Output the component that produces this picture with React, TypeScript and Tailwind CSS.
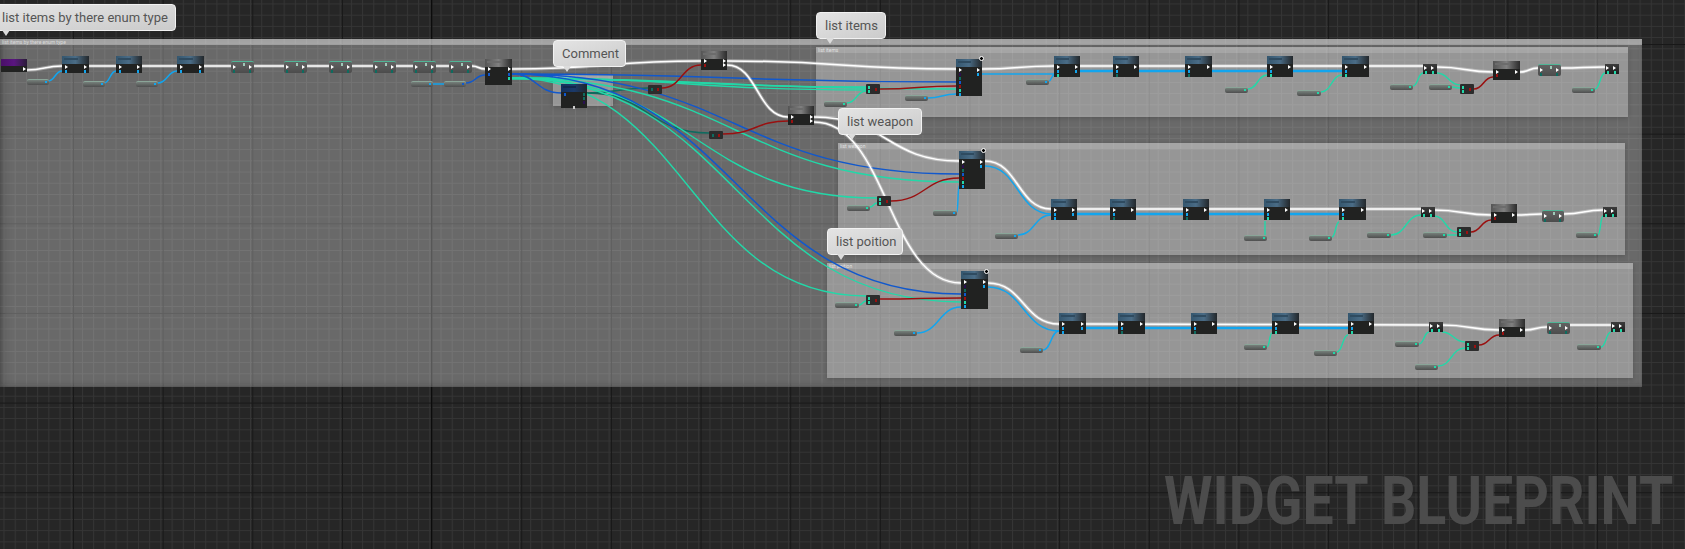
const W = "#ffffff";
const B = "#12a5ee";
const D = "#1158cc";
const T = "#22d8a8";
const DT = "#0f6b5f";
const R = "#9a1010";
const V = "#2a1050";

type Pin = [number, number, string];
type Kind = "blue" | "navy" | "grey" | "purple" | "green" | "exec" | "conv";

const node = (x: number, y: number, w: number, h: number, kind: Kind, pins: Pin[] = []) => ({ x, y, w, h, kind, pins });

// the long "set" nodes in each row
const row = (x: number, y: number, w: number, a: string, b: string, out = true, h = 21) =>
  node(x, y, w, h, "blue", [
    [3, 9, W],
    [w - 5, 9, W],
    [3, 14, a],
    ...(h > 17 ? ([[3, 18, b]] as Pin[]) : []),
    ...(out ? ([[w - 5, 14, a]] as Pin[]) : []),
  ]);
const green = (x: number, y: number, w = 23) =>
  node(x, y, w, 12, "green", [
    [2, 3, W],
    [w - 5, 3, W],
    [2, 8, DT],
    [w - 5, 8, DT],
    [w / 2, 1, "#9fc9b8"],
  ]);
const exec = (x: number, y: number) =>
  node(x, y, 14, 10, "exec", [
    [1, 2, W],
    [8, 2, W],
    [2, 7, T],
    [9, 7, T],
  ]);
const conv = (x: number, y: number) =>
  node(x, y, 14, 10, "conv", [
    [2, 2, T],
    [2, 6, T],
    [9, 4, R],
  ]);
const dark = (x: number, y: number, w: number, h: number) =>
  node(x, y, w, h, "grey", [
    [3, 9, W],
    [w - 5, 9, W],
    [3, 13, R],
  ]);
const setter = (x: number, y: number, w: number, h: number, header: Kind = "blue") =>
  node(x, y, w, h, header, [
    [3, 9, W],
    [w - 5, 9, W],
    [w - 5, 14, B],
    [3, 14, V],
    [3, 18, DT],
    [3, 22, D],
    [3, 26, R],
    [3, 30, T],
    [3, 34, B],
  ]);

const nodes = [
  node(1, 59, 26, 13, "purple", [[22, 8, W]]),
  row(62, 56, 27, B, DT, true, 17),
  row(116, 56, 26, B, DT, true, 17),
  row(177, 56, 27, B, DT, true, 17),
  green(231, 61),
  green(284, 61),
  green(329, 61),
  green(373, 61),
  green(413, 61),
  green(449, 61),
  node(485, 59, 27, 26, "grey", [
    [3, 8, W],
    [23, 8, W],
    [3, 14, D],
    [23, 14, D],
    [23, 18, T],
  ]),
  node(561, 84, 26, 24, "navy", [
    [3, 9, D],
    [22, 9, DT],
    [22, 13, DT],
    [22, 17, V],
    [12, 22, "#cccccc"],
  ]),
  node(701, 51, 26, 19, "grey", [
    [3, 8, W],
    [22, 8, W],
    [22, 12, W],
    [3, 13, R],
  ]),
  node(788, 106, 26, 19, "grey", [
    [3, 9, W],
    [22, 9, W],
    [22, 13, W],
    [3, 14, R],
  ]),
  node(648, 85, 14, 9, "conv", [
    [3, 3, DT],
    [9, 3, R],
  ]),
  node(709, 131, 14, 8, "conv", [
    [3, 3, DT],
    [9, 3, R],
  ]),

  // list items
  setter(956, 59, 26, 37),
  conv(866, 84),
  row(1054, 56, 26, B, T),
  row(1113, 56, 26, B, DT, false),
  row(1185, 56, 27, B, DT, false),
  row(1267, 56, 26, B, T, false),
  row(1342, 56, 27, B, T, false),
  exec(1423, 64),
  conv(1460, 84),
  dark(1493, 61, 27, 19),
  green(1538, 64),
  exec(1605, 64),

  // list weapon
  setter(959, 151, 26, 38),
  conv(877, 196),
  row(1051, 199, 26, B, B),
  row(1110, 199, 26, B, DT, false),
  row(1183, 199, 26, B, DT, false),
  row(1264, 199, 26, B, T, false),
  row(1339, 199, 27, B, T, false),
  exec(1421, 207),
  conv(1457, 227),
  dark(1491, 204, 26, 19),
  green(1542, 210, 22),
  exec(1603, 207),

  // list poition
  setter(961, 271, 27, 38),
  conv(866, 295),
  row(1059, 313, 27, B, B),
  row(1118, 313, 27, B, DT, false),
  row(1191, 313, 26, B, DT, false),
  row(1272, 313, 27, B, T, false),
  row(1348, 313, 26, B, T, false),
  exec(1429, 322),
  conv(1465, 341),
  dark(1499, 319, 26, 18),
  green(1547, 322),
  exec(1611, 322),
];

const pills: [number, number, number, string][] = [
  [27, 79, 22, B],
  [83, 81, 22, B],
  [136, 81, 22, B],
  [411, 81, 22, B],
  [444, 81, 22, D],
  [824, 101, 23, T],
  [905, 95, 23, B],
  [1026, 79, 23, B],
  [1225, 87, 23, T],
  [1297, 90, 24, T],
  [1390, 84, 23, T],
  [1429, 84, 23, T],
  [1572, 87, 23, T],
  [847, 205, 23, T],
  [933, 210, 24, B],
  [995, 233, 23, B],
  [1244, 235, 23, T],
  [1309, 235, 23, T],
  [1367, 232, 24, T],
  [1423, 232, 24, T],
  [1576, 232, 22, T],
  [835, 302, 24, T],
  [894, 330, 23, B],
  [1020, 347, 23, B],
  [1244, 344, 23, T],
  [1314, 350, 23, T],
  [1395, 341, 24, T],
  [1415, 364, 23, T],
  [1577, 344, 24, T],
];

type Wire = [number, number, number, number];

const whiteWires: Wire[] = [
  [27, 70, 62, 66], [88, 66, 116, 66], [142, 66, 177, 66], [204, 66, 231, 66], [253, 66, 284, 66],
  [307, 66, 329, 66], [352, 66, 373, 66], [396, 66, 413, 66], [436, 66, 449, 66], [472, 66, 485, 69],
  [512, 69, 701, 61], [727, 61, 956, 69], [727, 65, 788, 117], [814, 117, 959, 161], [814, 122, 961, 283],
  [982, 69, 1054, 66], [1080, 66, 1423, 66], [1437, 67, 1493, 72], [1520, 72, 1538, 68], [1561, 68, 1605, 67],
  [985, 161, 1051, 209], [1077, 209, 1421, 209], [1434, 210, 1491, 215], [1517, 215, 1542, 214], [1564, 214, 1603, 210],
  [988, 283, 1059, 324], [1086, 324, 1429, 325], [1442, 325, 1499, 330], [1525, 330, 1547, 327], [1570, 325, 1611, 325],
];

const coloured: [string, number, Wire[]][] = [
  [DT, 1.4, [[587, 93, 648, 88], [587, 93, 709, 133]]],
  [T, 1.4, [
    [512, 78, 866, 87], [512, 78, 866, 90], [512, 79, 956, 89], [512, 78, 959, 182], [512, 78, 877, 198],
    [512, 78, 961, 302], [512, 78, 866, 296], [847, 103, 866, 91], [1248, 89, 1267, 75], [1321, 92, 1342, 75],
    [1413, 86, 1423, 73], [1452, 87, 1460, 88], [1437, 73, 1460, 85], [1595, 89, 1605, 73],
    [870, 207, 877, 203], [1265, 237, 1265, 221], [1332, 237, 1339, 222], [1391, 235, 1421, 215],
    [1447, 235, 1457, 235], [1434, 216, 1457, 232], [1598, 235, 1603, 216],
    [859, 305, 866, 301], [1267, 347, 1272, 333], [1337, 352, 1348, 335], [1419, 344, 1429, 332],
    [1438, 366, 1465, 348], [1442, 332, 1465, 342], [1601, 347, 1611, 332],
  ]],
  [D, 1.5, [[512, 74, 959, 82], [512, 74, 959, 174], [512, 74, 961, 294], [512, 74, 561, 93], [466, 83, 485, 75]]],
  [B, 1.5, [
    [48, 81, 62, 71], [104, 83, 116, 71], [158, 83, 177, 71], [433, 84, 444, 84], [928, 98, 956, 94],
    [982, 74, 1054, 74], [1049, 81, 1054, 75], [985, 166, 1051, 214], [1018, 235, 1051, 215], [957, 212, 959, 186],
    [917, 333, 961, 307], [988, 287, 1059, 331], [1043, 350, 1059, 331],
  ]],
  [B, 2.4, [[1080, 71, 1342, 71], [1077, 214, 1339, 214], [1086, 328, 1348, 328]]],
  [R, 1.5, [
    [662, 88, 701, 65], [723, 134, 788, 121], [880, 89, 956, 86], [891, 201, 959, 178], [880, 299, 961, 298],
    [1474, 89, 1493, 77], [1471, 232, 1491, 220], [1479, 345, 1499, 335],
  ]],
];

const curve = ([a, b, c, d]: Wire) => {
  const k = Math.abs(c - a) * 0.5;
  return `M${a} ${b} C${a + k} ${b} ${c - k} ${d} ${c} ${d}`;
};

const comments = [
  { x: 816, y: 47, w: 812, h: 70, title: "list items" },
  { x: 838, y: 143, w: 787, h: 112, title: "list weapon" },
  { x: 827, y: 263, w: 806, h: 115, title: "list poition" },
  { x: 553, y: 75, w: 60, h: 31, title: "Comment" },
];

const bubbles = [
  { x: -7, y: 4, w: 183, h: 27, arrow: 8, text: "list items by there enum type" },
  { x: 553, y: 40, w: 73, h: 27, arrow: 9, text: "Comment" },
  { x: 816, y: 12, w: 70, h: 27, arrow: 9, text: "list items" },
  { x: 838, y: 108, w: 84, h: 27, arrow: 9, text: "list weapon" },
  { x: 827, y: 228, w: 76, h: 27, arrow: 9, text: "list poition" },
];

const clocks = [
  [979, 56],
  [981, 148],
  [984, 269],
];

function GridLines() {
  return (
    <svg className="absolute inset-0" width="1685" height="549">
      <defs>
        <pattern id="minor" width="11.206" height="11.206" patternUnits="userSpaceOnUse" x="3.5" y="3.5">
          <path d="M0.5 0V11.206M0 0.5H11.206" stroke="#353535" strokeWidth="1" fill="none" />
        </pattern>
        <pattern id="major" width="89.65" height="89.65" patternUnits="userSpaceOnUse" x="73" y="44">
          <path d="M0.5 0V89.65M0 0.5H89.65" stroke="#181818" strokeWidth="1" fill="none" />
        </pattern>
      </defs>
      <rect width="1685" height="549" fill="#262626" />
      <rect width="1685" height="549" fill="url(#minor)" />
      <rect width="1685" height="549" fill="url(#major)" />
      <path d="M431.5 0V549" stroke="#0c0c0c" strokeWidth="1" />
    </svg>
  );
}

function Wires() {
  return (
    <svg className="absolute inset-0" width="1685" height="549" fill="none">
      {coloured.map(([color, width, list], i) => (
        <g key={i} stroke={color} strokeWidth={width}>
          {list.map((w, j) => (
            <path key={j} d={curve(w)} />
          ))}
        </g>
      ))}
      <g stroke="#ffffff" strokeOpacity="0.35" strokeWidth="3.5">
        {whiteWires.map((w, i) => (
          <path key={i} d={curve(w)} />
        ))}
      </g>
      <g stroke="#ffffff" strokeWidth="1.5">
        {whiteWires.map((w, i) => (
          <path key={i} d={curve(w)} />
        ))}
      </g>
    </svg>
  );
}

function Node({ x, y, w, h, kind, pins }: ReturnType<typeof node>) {
  return (
    <div
      className={
        kind === "green"
          ? "absolute border-t border-[#4fb596] bg-gradient-to-b from-[#626262] to-[#4c4c4c] rounded-[2px]"
          : kind === "conv"
            ? "absolute bg-[#2c2c2c] rounded-[1px]"
            : kind === "exec"
              ? "absolute bg-gradient-to-b from-[#3c3c3c] to-[#1d1d1d]"
              : "absolute bg-[#212221]"
      }
      style={{ left: x, top: y, width: w, height: h }}
    >
      {kind === "blue" && (
        <div className="h-[8px] bg-gradient-to-r from-[#34566e] via-[#4a6c86] to-[#23282c] px-[2px] pt-[2px]">
          <div className="h-[2px] w-3/5 bg-[#2f4b60]" />
        </div>
      )}
      {kind === "navy" && (
        <div className="h-[8px] bg-gradient-to-r from-[#13305c] via-[#1b3a6a] to-[#20262e] px-[2px] pt-[2px]">
          <div className="h-[2px] w-3/5 bg-[#12284c]" />
        </div>
      )}
      {kind === "grey" && (
        <div className="h-[8px] bg-gradient-to-r from-[#555555] via-[#808080] to-[#2c2c2c] px-[2px] pt-[2px]">
          <div className="h-[2px] w-3/5 bg-[#6c6c6c]" />
        </div>
      )}
      {kind === "purple" && <div className="h-[7px] bg-gradient-to-r from-[#4a1068] via-[#5a1580] to-[#2a1a38]" />}
      {pins.map(([px, py, color], i) => (
        <span
          key={i}
          className={
            color === W
              ? "absolute h-[4px] w-[3px] [clip-path:polygon(0_0,100%_50%,0_100%)]"
              : "absolute h-[3px] w-[2px]"
          }
          style={{ left: px, top: py, backgroundColor: color }}
        />
      ))}
    </div>
  );
}

function Bubble({ x, y, w, h, arrow, text }: (typeof bubbles)[number]) {
  return (
    <div
      className="absolute flex items-center rounded-[4px] border border-[#f2f2f2] bg-gradient-to-br from-[#e4e4e4] to-[#cbcbcb] pl-[8px] text-[13px] whitespace-nowrap text-[#555555]"
      style={{ left: x, top: y, width: w, height: h }}
    >
      {text}
      <span
        className="absolute top-full size-0 border-x-[4px] border-t-[6px] border-x-transparent border-t-[#dcdcdc]"
        style={{ left: arrow }}
      />
    </div>
  );
}

export default function App() {
  return (
    <div className="relative h-[549px] w-[1685px] overflow-hidden bg-[#262626] [font-family:Roboto,sans-serif]">
      <GridLines />

      <div className="absolute top-[39px] left-0 h-[348px] w-[1642px] bg-white/31 shadow-[inset_0_-2px_5px_rgba(0,0,0,0.18),inset_8px_0_10px_-6px_rgba(0,0,0,0.25)]">
        <div className="h-[6px] truncate bg-white/40 pl-[2px] text-[5px] leading-[6px] text-white/60">
          list items by there enum type
        </div>
      </div>

      {comments.map((c) => (
        <div
          key={c.title}
          className="absolute bg-white/30 shadow-[0_1px_5px_rgba(0,0,0,0.2)]"
          style={{ left: c.x, top: c.y, width: c.w, height: c.h }}
        >
          <div className="h-[6px] bg-white/15 pl-[2px] text-[5px] leading-[6px] text-white/70">{c.title}</div>
        </div>
      ))}

      <Wires />

      {pills.map(([x, y, w, color], i) => (
        <div
          key={i}
          className="absolute h-[6px] rounded-[2px] border-t border-[#8aa598] bg-gradient-to-b from-[#76807b] to-[#4f4f4f]"
          style={{ left: x, top: y, width: w }}
        >
          <span className="absolute right-[2px] top-[1px] size-[2px]" style={{ backgroundColor: color }} />
        </div>
      ))}

      {nodes.map((n, i) => (
        <Node key={i} {...n} />
      ))}

      {clocks.map(([x, y]) => (
        <span
          key={x}
          className="absolute size-[5px] rounded-full border border-white bg-black"
          style={{ left: x, top: y }}
        />
      ))}

      {bubbles.map((b) => (
        <Bubble key={b.text} {...b} />
      ))}

      <div className="absolute inset-0 flex items-end justify-end pr-[12px] pb-[8px]">
        <span className="origin-right scale-x-[0.84] text-[66px] leading-[78px] font-bold whitespace-nowrap text-[#4c4c4c]">
          WIDGET BLUEPRINT
        </span>
      </div>
    </div>
  );
}
